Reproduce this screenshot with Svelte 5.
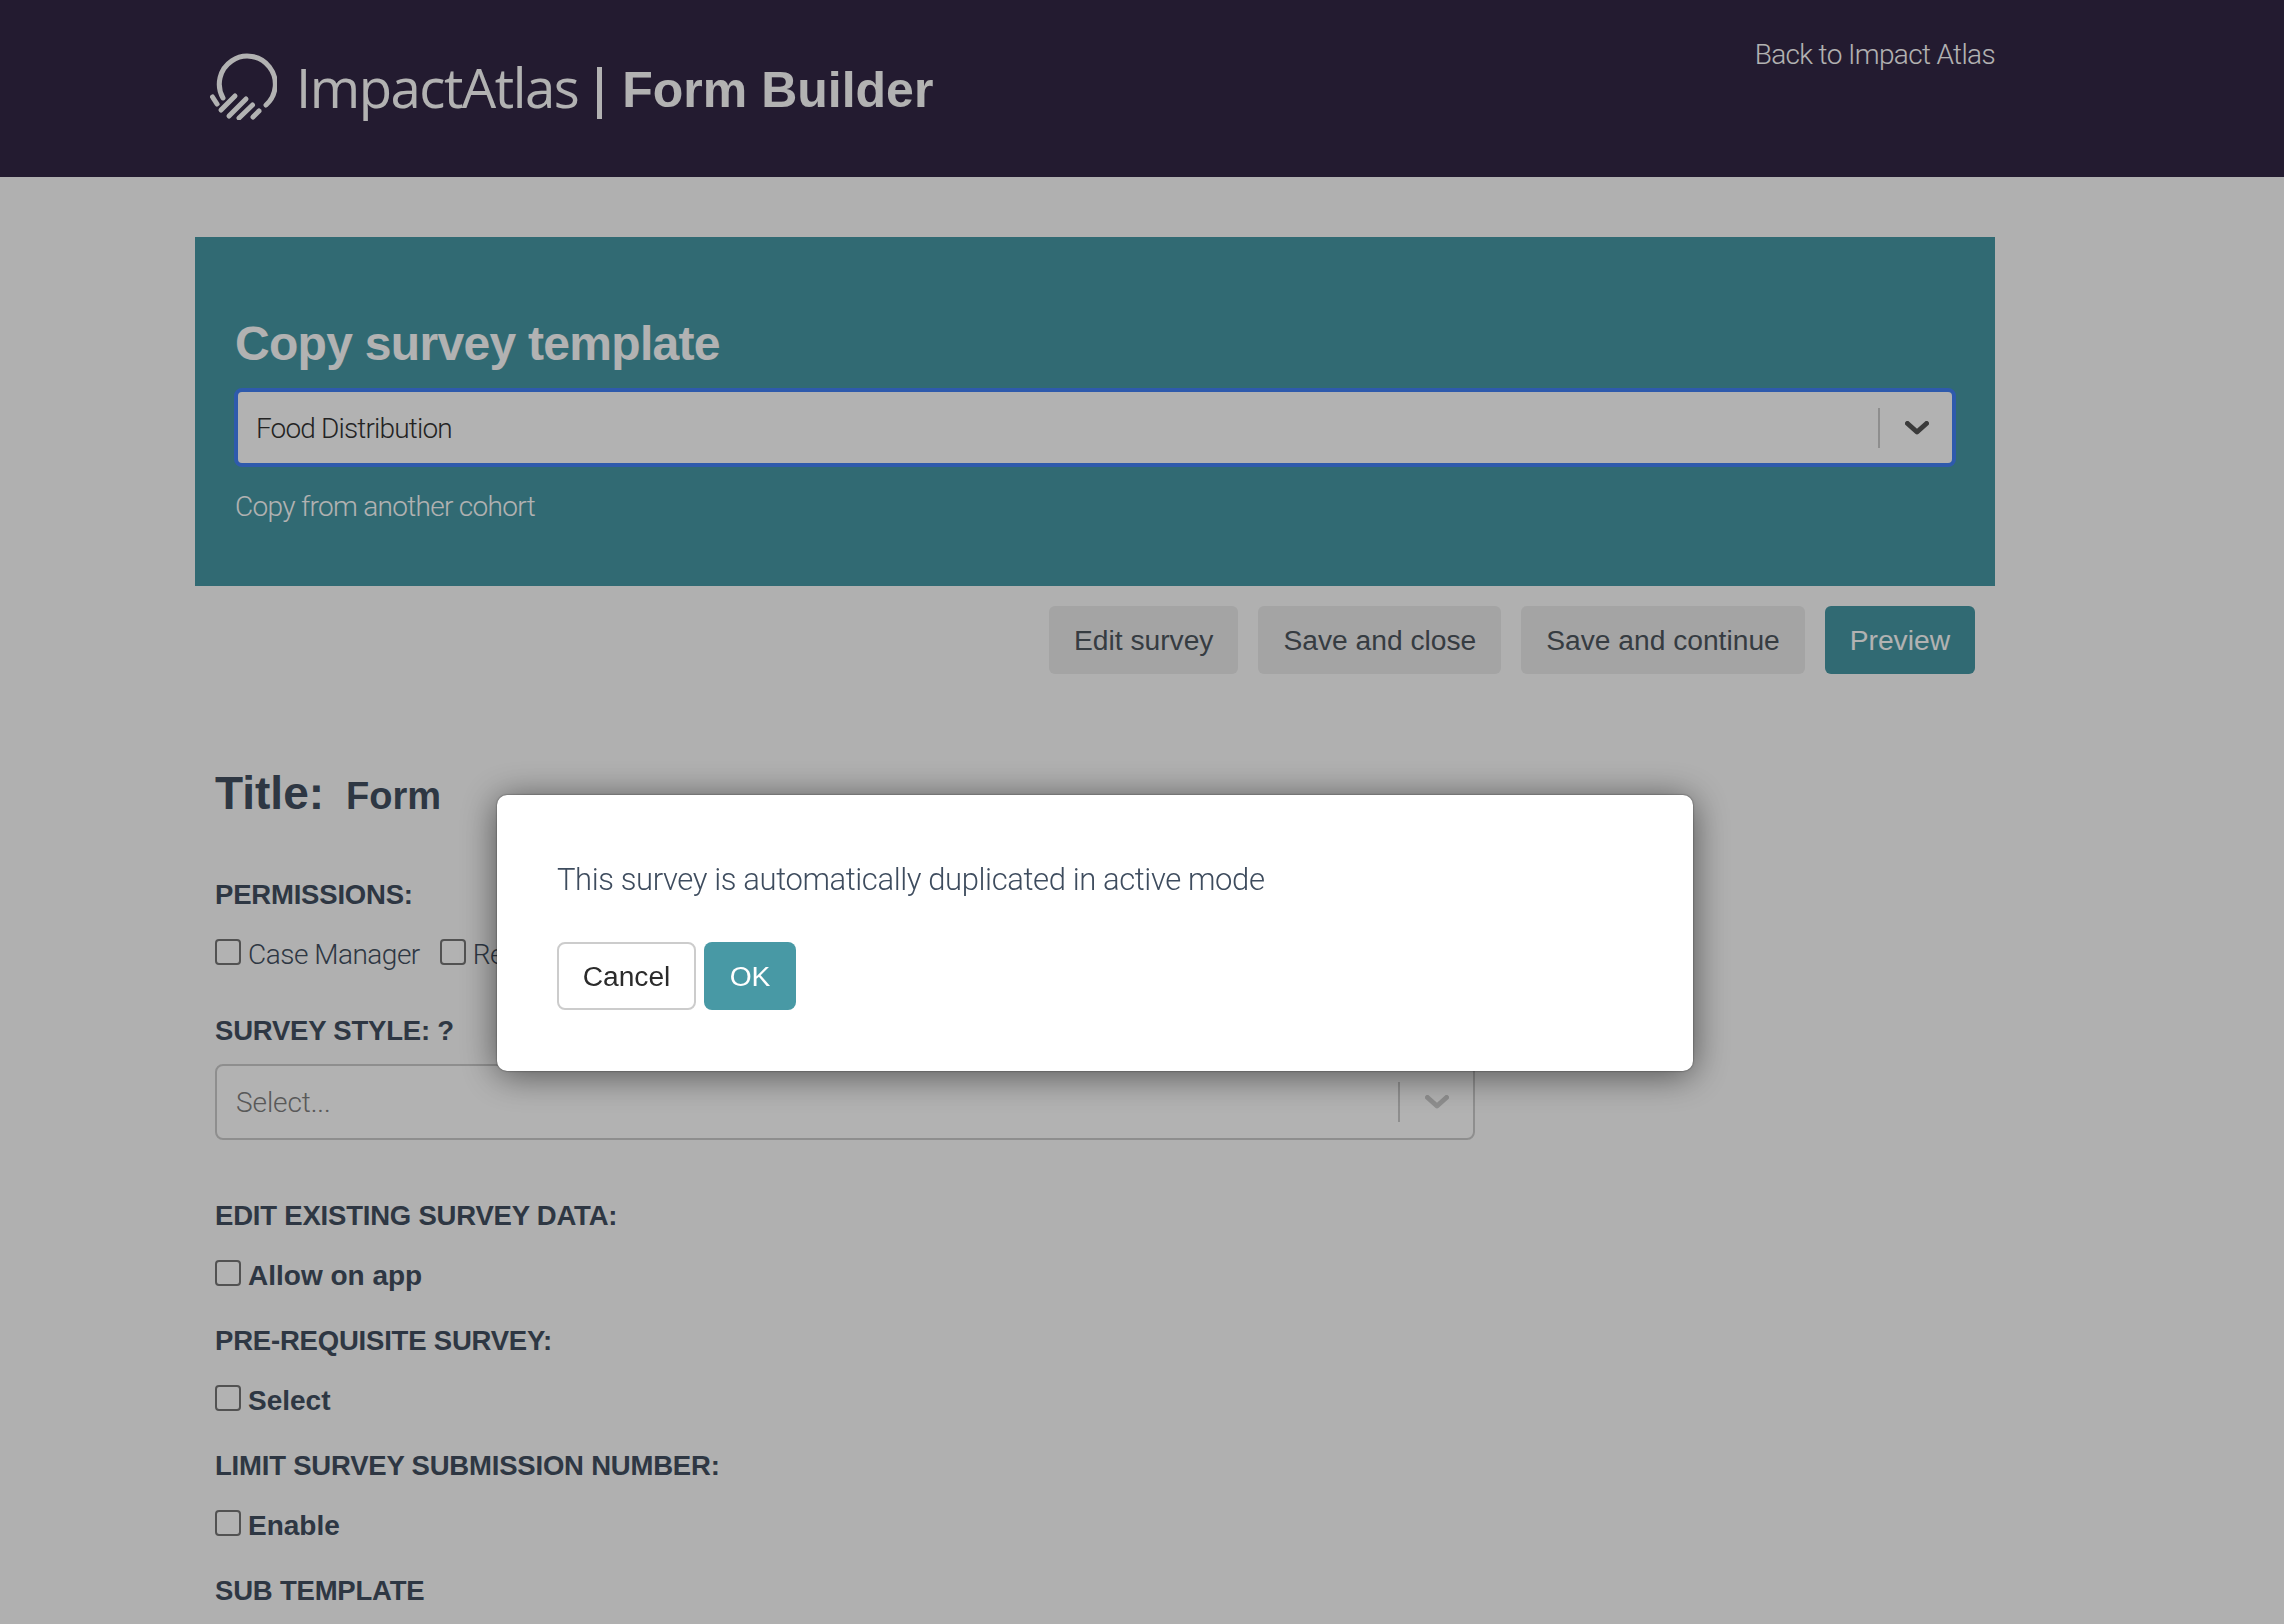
<script>
  const checks = [
    { heading: 'EDIT EXISTING SURVEY DATA:', label: 'Allow on app' },
    { heading: 'PRE-REQUISITE SURVEY:', label: 'Select' },
    { heading: 'LIMIT SURVEY SUBMISSION NUMBER:', label: 'Enable' }
  ];
  const actions = ['Edit survey', 'Save and close', 'Save and continue'];
</script>

<header class="topbar">
  <div class="container topbar-inner">
    <div class="brand">
      <svg class="logo" viewBox="30 23 67 67" fill="none" stroke="#fff" stroke-width="5" stroke-linecap="round">
        <path d="M43 68 A28 28 0 1 1 86 75" />
        <path d="M32.5 67 L37 74" />
        <path d="M41 80 L55 66" />
        <path d="M49 86 L66 69" />
        <path d="M59 88 L72.500 75" />
        <path d="M73 87 L79 81" />
      </svg>
      <span class="wordmark">ImpactAtlas</span>
      <span class="divider"></span>
      <span class="product">Form Builder</span>
    </div>
    <a class="back" href="#top">Back to Impact Atlas</a>
  </div>
</header>

<main class="container">
  <section class="band">
    <h2>Copy survey template</h2>
    <div class="select focused">
      <span class="value">Food Distribution</span>
      <span class="sep"></span>
      <svg class="chev" viewBox="0 0 24 14"><path d="M2.500 2.500 L12 11 L21.500 2.500" /></svg>
    </div>
    <p class="hint">Copy from another cohort</p>
  </section>

  <div class="actions">
    {#each actions as a}
      <button class="btn">{a}</button>
    {/each}
    <button class="btn primary">Preview</button>
  </div>

  <div class="form">
    <div class="title"><strong>Title:</strong> <span>Form</span></div>

    <h4 class="first">PERMISSIONS:</h4>
    <div class="perm-row">
      <label><span class="box"></span>Case Manager</label>
      <label><span class="box"></span>Reviewer</label>
    </div>

    <h4 class="style-head">SURVEY STYLE: ?</h4>
    <div class="select plain">
      <span class="value muted">Select...</span>
      <span class="sep"></span>
      <svg class="chev dim" viewBox="0 0 24 14"><path d="M2.500 2.500 L12 11 L21.500 2.500" /></svg>
    </div>

    {#each checks as c, i}
      <h4 class:edit-head={i === 0}>{c.heading}</h4>
      <label class="check-bold"><span class="box"></span>{c.label}</label>
    {/each}
    <h4>SUB TEMPLATE</h4>
  </div>
</main>

<div class="overlay"></div>
<div class="modal">
  <p>This survey is automatically duplicated in active mode</p>
  <div class="modal-btns">
    <button class="m-btn cancel">Cancel</button>
    <button class="m-btn ok">OK</button>
  </div>
</div>

<style>
  :global(body) {
    margin: 0;
    height: 1624px;
    overflow: hidden;
    background: #fcfcfc;
    font-family: Roboto, "Liberation Sans", sans-serif;
    color: #424f60;
  }

  .container {
    width: 1800px;
    margin-left: 195px;
  }

  .topbar {
    height: 177px;
    background: #332745;
  }

  .topbar-inner {
    display: flex;
    justify-content: space-between;
    align-items: flex-start;
  }

  .brand {
    display: flex;
    align-items: flex-start;
    padding: 53px 0 0 15px;
    color: #fff;
  }

  .logo {
    width: 67px;
    height: 67px;
  }

  .wordmark {
    font-family: "Open Sans", sans-serif;
    font-weight: 400;
    font-size: 54.500px;
    letter-spacing: -1.5px;
    margin: 1px 0 0 19px;
    line-height: 67px;
  }

  .divider {
    width: 5px;
    height: 52px;
    margin: 14px 20px 0 19px;
    background: #fff;
  }

  .product {
    font-family: "Liberation Sans", sans-serif;
    font-weight: 700;
    font-size: 50px;
    line-height: 67px;
    margin-top: 4px;
  }

  .back {
    color: #fff;
    text-decoration: none;
    font-weight: 300;
    font-size: 28px;
    letter-spacing: -0.65px;
    margin-top: 37px;
    line-height: 36px;
  }

  .band {
    margin-top: 60px;
    height: 349px;
    box-sizing: border-box;
    background: #4799a5;
    padding: 76px 40px 0;
    color: #fff;
  }

  .band h2 {
    margin: 0 0 13px;
    font-family: "Liberation Sans", sans-serif;
    font-size: 48px;
    letter-spacing: -0.7px;
    line-height: 62px;
    font-weight: 700;
  }

  .select {
    display: flex;
    align-items: center;
    box-sizing: border-box;
    height: 76px;
    background: #fff;
    border-radius: 8px;
    padding: 0 24px 0 19px;
    font-weight: 300;
    font-size: 28px;
  }

  .select.focused {
    height: 79px;
    margin: 0 -1px;
    padding: 1px 23px 0 18px;
    border: 4px solid #4382f7;
    color: #333;
  }

  .select.plain {
    width: 1260px;
    border: 2px solid #ccc;
  }

  .value {
    flex: 1;
    letter-spacing: -0.84px;
  }

  .muted {
    color: #808080;
    letter-spacing: -0.1px;
  }

  .sep {
    width: 2px;
    height: 40px;
    background: #ccc;
    margin-right: 25px;
  }

  .chev {
    width: 24px;
    height: 14px;
    fill: none;
    stroke: #555;
    stroke-width: 5;
    stroke-linecap: round;
    stroke-linejoin: round;
  }

  .chev.dim {
    stroke: #ccc;
  }

  .hint {
    margin: 22px 0 0;
    font-weight: 300;
    font-size: 28px;
    line-height: 36px;
    letter-spacing: -0.7px;
  }

  .actions {
    display: flex;
    justify-content: flex-end;
    gap: 20px;
    padding: 20px 20px 0 0;
  }

  .btn {
    height: 68px;
    padding: 0 25px;
    border: none;
    border-radius: 6px;
    background: #ebebeb;
    color: #4e565e;
    font: 400 28.200px "Liberation Sans", sans-serif;
  }

  .btn.primary {
    background: #4799a5;
    color: #fff;
  }

  .form {
    padding: 88.500px 0 0 20px;
  }

  .title {
    display: flex;
    align-items: baseline;
    gap: 22px;
    line-height: 60px;
  }

  .title strong {
    font-family: "Liberation Sans", sans-serif;
    font-size: 46px;
  }

  .title span {
    font-family: "Liberation Sans", sans-serif;
    font-weight: 700;
    font-size: 38px;
  }

  h4 {
    margin: 29px 0 0;
    font-family: "Liberation Sans", sans-serif;
    font-size: 27.500px;
    letter-spacing: -0.2px;
    line-height: 36px;
    font-weight: 700;
  }

  h4.first {
    margin-top: 51.500px;
  }

  h4.style-head {
    margin: 40.500px 0 15px;
  }

  h4.edit-head {
    margin-top: 58px;
  }

  .perm-row {
    display: flex;
    gap: 20px;
    margin-top: 23.500px;
    height: 36px;
  }

  label {
    display: flex;
    align-items: center;
    font-weight: 300;
    font-size: 28px;
    line-height: 36px;
    letter-spacing: -0.5px;
  }

  .box {
    width: 26px;
    height: 26px;
    box-sizing: border-box;
    border: 2px solid #767676;
    border-radius: 4px;
    background: #fff;
    margin: -6px 7px 0 0;
  }

  .check-bold {
    margin-top: 24px;
    font-family: "Liberation Sans", sans-serif;
    font-weight: 700;
    letter-spacing: 0;
    font-size: 28px;
  }

  .overlay {
    position: fixed;
    inset: 0;
    background: rgba(0, 0, 0, 0.3);
  }

  .modal {
    position: fixed;
    left: 497px;
    top: 795px;
    width: 1196px;
    height: 276px;
    box-sizing: border-box;
    padding: 61px 60px 0;
    background: #fff;
    border-radius: 10px;
    box-shadow: 0 0 2px rgba(0, 0, 0, 0.6), 0 4px 36px rgba(0, 0, 0, 0.55);
  }

  .modal p {
    margin: 0;
    font-weight: 300;
    font-size: 31px;
    line-height: 48px;
    letter-spacing: -0.4px;
    color: #3e4c5e;
  }

  .modal-btns {
    display: flex;
    gap: 8px;
    margin-top: 38px;
  }

  .m-btn {
    height: 68px;
    border-radius: 8px;
    font: 400 28.200px "Liberation Sans", sans-serif;
  }

  .cancel {
    width: 139px;
    background: #fff;
    border: 2px solid #ccc;
    color: #2b2b2b;
  }

  .ok {
    width: 92px;
    background: #4899a5;
    border: none;
    color: #fff;
  }
</style>
